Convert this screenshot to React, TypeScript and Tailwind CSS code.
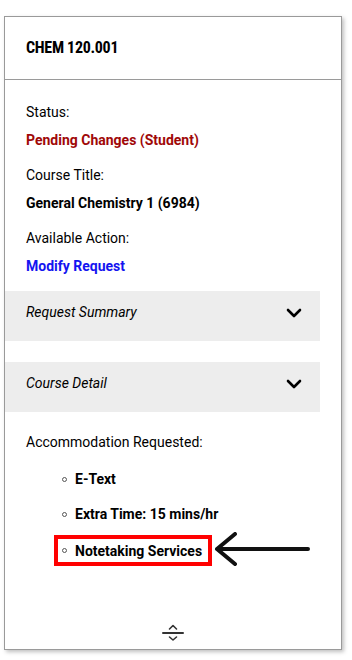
import { ChevronDown } from "lucide-react";

const font = "font-[Roboto,'Liberation_Sans',sans-serif]";

function Field({ label, value, tone }: { label: string; value: string; tone: string }) {
  return (
    <div>
      <div className="mt-[15px] h-[20px] leading-[20px] text-[14px] text-black">{label}</div>
      <div className={`mt-[8px] h-[20px] leading-[20px] text-[14px] font-bold ${tone}`}>{value}</div>
    </div>
  );
}

function Panel({ title }: { title: string }) {
  return (
    <div className="-ml-[21px] flex h-[50px] items-center justify-between bg-[#ededed] pb-[7px] pl-[21px] pr-[14px]">
      <span className="text-[14px] italic text-black">{title}</span>
      <ChevronDown className="h-[24px] w-[24px] text-black" strokeWidth={2.6} />
    </div>
  );
}

function Bullet() {
  return <span className="mr-[8px] inline-block h-[5px] w-[5px] rounded-full border border-[#555]" />;
}

export default function App() {
  return (
    <div className={`h-[660px] w-[352px] bg-white pl-[4px] pt-[16px] ${font}`}>
      <div className="flex h-[634px] w-[338px] flex-col border border-[#9a9a9a] bg-white shadow-[2px_2px_4px_rgba(0,0,0,0.25)]">
        {/* header */}
        <div className="flex h-[63px] items-center border-b border-[#9a9a9a] px-[21px]">
          <span className="text-[16px] font-bold tracking-[-0.3px] text-black [font-stretch:condensed]">CHEM 120.001</span>
        </div>

        <div className="flex-1 px-[21px] pt-[7px]">
          <Field label="Status:" value="Pending Changes (Student)" tone="text-[#a00808]" />
          <div className="mt-[7px]" />
          <Field label="Course Title:" value="General Chemistry 1 (6984)" tone="text-black" />
          <div className="mt-[7px]" />
          <Field label="Available Action:" value="Modify Request" tone="text-[#1414f0]" />

          <div className="mt-[15px]">
            <Panel title="Request Summary" />
          </div>
          <div className="mt-[21px]">
            <Panel title="Course Detail" />
          </div>

          <div className="mt-[20px] h-[20px] text-[14px] leading-[20px] text-black">Accommodation Requested:</div>

          <ul className="mt-[12px] flex flex-col">
            <li className="ml-[28px] flex items-center border-4 border-transparent py-px pl-[4px] text-[14px] font-bold leading-[20px] text-black">
              <Bullet />
              E-Text
            </li>
            <li className="ml-[28px] mt-[5px] flex items-center border-4 border-transparent py-px pl-[4px] text-[14px] font-bold leading-[20px] text-black">
              <Bullet />
              Extra Time: 15 mins/hr
            </li>
            <li className="mt-[3px] flex items-center">
              <div className="ml-[28px] flex w-[158px] items-center border-4 border-[#ff0000] pb-px pl-[4px] pt-[2px] text-[14px] font-bold leading-[20px] text-black">
                <Bullet />
                Notetaking Services
              </div>
              <svg className="ml-[1px]" width="98" height="36" viewBox="0 0 98 36" fill="none">
                <path d="M95 17H4M22 2L4 17L22 32" stroke="#111" strokeWidth="4" strokeLinecap="round" strokeLinejoin="round" />
              </svg>
            </li>
          </ul>
        </div>

        <div className="flex justify-center pb-[4px]">
          <svg width="24" height="24" viewBox="0 0 24 24" fill="none" stroke="#333" strokeLinecap="round" strokeLinejoin="round">
            <path d="M8.5 8L12 4.5L15.5 8" strokeWidth="1.6" />
            <path d="M2 12H22" strokeWidth="2" />
            <path d="M8.5 16L12 19L15.5 16" strokeWidth="1.6" />
          </svg>
        </div>
      </div>
    </div>
  );
}
